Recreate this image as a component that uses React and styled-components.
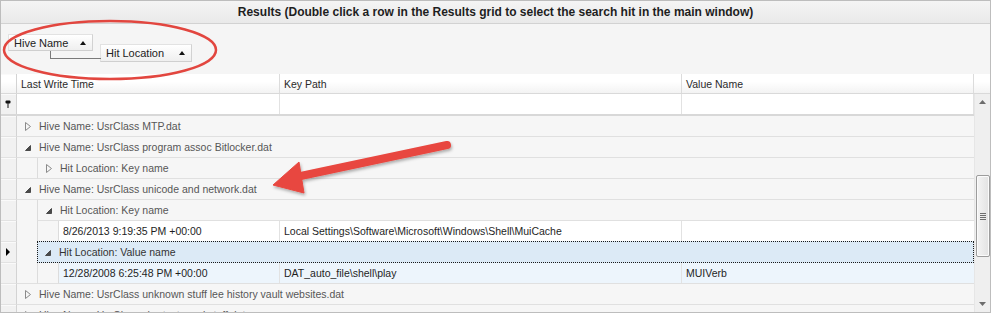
import React from "react";
import styled, { createGlobalStyle } from "styled-components";

const GlobalStyle = createGlobalStyle`
  html, body {
    margin: 0;
    padding: 0;
    background: #ffffff;
  }
  body {
    font-family: "Liberation Sans", Arial, sans-serif;
  }
`;

const Frame = styled.div`
  position: relative;
  width: 991px;
  height: 313px;
  box-sizing: border-box;
  border: 1px solid #bdbdbd;
  overflow: hidden;
  background: #f6f6f6;
  font-family: "Liberation Sans", Arial, sans-serif;
  font-size: 10.5px;
`;

const TitleBar = styled.div`
  height: 23px;
  box-sizing: border-box;
  border-bottom: 1px solid #d2d2d2;
  background: linear-gradient(#f4f4f4, #e9e9e9);
  display: flex;
  align-items: center;
  justify-content: center;
  font-weight: bold;
  font-size: 12px;
  color: #1e1e1e;
`;

const GroupPanel = styled.div`
  height: 50px;
  box-sizing: border-box;
  padding: 10px 7px 0;
  background: #f5f5f5;
  display: flex;
  align-items: flex-start;
`;

const GroupChip = styled.div`
  position: relative;
  box-sizing: border-box;
  width: ${(p) => p.$w}px;
  height: ${(p) => p.$h}px;
  margin-top: ${(p) => p.$top || 0}px;
  margin-left: ${(p) => p.$left || 0}px;
  padding: 0 6px 0 5px;
  display: flex;
  align-items: center;
  justify-content: space-between;
  background: linear-gradient(#ffffff, #efefef);
  border: 1px solid #e2e2e2;
  border-right-color: #d2d2d2;
  border-bottom-color: #cfcfcf;
  color: #222;
  font-size: 11px;

  ${(p) =>
    p.$linked &&
    `
    &::before {
      content: "";
      position: absolute;
      left: -51px;
      top: 6px;
      width: 50px;
      height: 7px;
      border-left: 1px solid #7a7a7a;
      border-bottom: 1px solid #7a7a7a;
    }
  `}
`;

const SortArrow = styled.span`
  width: 0;
  height: 0;
  border-left: 3.5px solid transparent;
  border-right: 3.5px solid transparent;
  border-bottom: 4px solid #111;
`;

const Grid = styled.div`
  display: flex;
  flex-direction: column;
`;

const HeaderRow = styled.div`
  display: flex;
  height: 20px;
  box-sizing: border-box;
  border-bottom: 1px solid #d9d9d9;
  background: linear-gradient(#ffffff 40%, #f3f3f3);
`;

const HeaderCell = styled.div`
  width: ${(p) => p.$w}px;
  box-sizing: border-box;
  border-right: ${(p) => (p.$noLine ? "none" : "1px solid #dcdcdc")};
  padding-left: 4px;
  display: flex;
  align-items: center;
  color: #2a2a2a;
  white-space: nowrap;
`;

const Body = styled.div`
  display: flex;
`;

const Rows = styled.div`
  width: 973px;
  display: flex;
  flex-direction: column;
`;

const Row = styled.div`
  display: flex;
  height: ${(p) => p.$h || 21}px;
  flex-shrink: 0;
`;

const Indicator = styled.div`
  width: 16px;
  flex-shrink: 0;
  box-sizing: border-box;
  background: #f1f1f1;
  border-right: 1px solid #d3d3d3;
  border-bottom: 1px solid #e2e2e2;
  box-shadow: inset 0 1px 0 #fafafa;
  display: flex;
  align-items: center;
  justify-content: center;
  padding-right: 2px;
`;

const Indent = styled.div`
  flex-shrink: 0;
  box-sizing: border-box;
  width: ${(p) => (p.$inner ? 21 : 20)}px;
  border-left: ${(p) => (p.$inner ? "1px solid #dcdcdc" : "none")};
  border-bottom: ${(p) => (p.$closing ? "1px solid #e0e0e0" : "none")};
  background: #f6f6f6;
`;

const GroupBody = styled.div`
  flex: 1;
  box-sizing: border-box;
  display: flex;
  align-items: center;
  gap: 8px;
  padding-left: 8px;
  background: ${(p) => (p.$selected ? "#dceaf6" : "#f6f6f6")};
  border-left: ${(p) => (p.$nested ? "1px solid #dcdcdc" : "none")};
  border-bottom: 1px solid #e0e0e0;
  color: #575757;
  white-space: nowrap;

  ${(p) =>
    p.$selected &&
    `
    border: 1px dotted #1a1a1a;
    margin-top: -1px;
    height: 22px;
    padding-left: 7px;
    color: #333;
  `}
`;

const DataBody = styled.div`
  flex: 1;
  display: flex;
  box-sizing: border-box;
  border-left: 1px solid #dcdcdc;
  border-bottom: 1px solid #e0e0e0;
  background: ${(p) => (p.$tint ? "#edf5fc" : "#ffffff")};
  color: #1e1e1e;
`;

const Cell = styled.div`
  width: ${(p) => p.$w}px;
  flex-shrink: 0;
  box-sizing: border-box;
  border-right: ${(p) => (p.$noLine ? "none" : "1px solid #e2e2e2")};
  padding-left: 4px;
  display: flex;
  align-items: center;
  white-space: nowrap;
  overflow: hidden;
`;

const FilterRow = styled.div`
  display: flex;
  height: 22px;
  box-sizing: border-box;
  border-bottom: 2px solid #d8d8d8;
  background: #ffffff;
`;

const ScrollBar = styled.div`
  width: 16px;
  height: 218px;
  box-sizing: border-box;
  background: #efefef;
  border-left: 1px solid #e6e6e6;
  display: flex;
  flex-direction: column;
  align-items: center;
`;

const ScrollArrow = styled.div`
  height: 16px;
  display: flex;
  align-items: center;
  justify-content: center;
  width: 100%;
`;

const ScrollTrack = styled.div`
  flex: 1;
  width: 100%;
  display: flex;
  flex-direction: column;
  align-items: center;
  padding-top: 65px;
  box-sizing: border-box;
`;

const Thumb = styled.div`
  width: 14px;
  height: 82px;
  box-sizing: border-box;
  border: 1px solid #9c9c9c;
  border-radius: 2px;
  background: linear-gradient(90deg, #f4f4f4, #e2e2e2);
  box-shadow: inset 0 0 0 1px #fbfbfb;
  display: flex;
  flex-direction: column;
  align-items: center;
  justify-content: center;
  gap: 1px;
`;

const Grip = styled.span`
  width: 6px;
  height: 1px;
  background: #6e6e6e;
`;

const Overlay = styled.svg`
  position: absolute;
  left: -1px;
  top: -1px;
  pointer-events: none;
`;

const Collapsed = () => (
  <svg width="6" height="9" viewBox="0 0 6 9">
    <path d="M0.5 0.5 L5.5 4.5 L0.5 8.5 Z" fill="none" stroke="#8a8a8a" strokeWidth="1" />
  </svg>
);

const Expanded = () => (
  <svg width="6" height="9" viewBox="0 0 6 9">
    <path d="M0.5 7.5 L5.5 7.5 L5.5 2.5 Z" fill="#4a4a4a" stroke="#4a4a4a" strokeWidth="1" strokeLinejoin="round" />
  </svg>
);

const CurrentMark = () => (
  <svg width="4" height="8" viewBox="0 0 4 8">
    <path d="M0 0 L4 4 L0 8 Z" fill="#000" />
  </svg>
);

const FilterPin = () => (
  <svg width="6" height="8" viewBox="0 0 6 8">
    <rect x="0.5" y="0.5" width="5" height="3" rx="1" fill="#111" />
    <rect x="2.5" y="3" width="1" height="5" fill="#111" />
  </svg>
);

const Tri = ({ up }) => (
  <svg width="7" height="4" viewBox="0 0 7 4">
    <path d={up ? "M0 4 L3.5 0 L7 4 Z" : "M0 0 L3.5 4 L7 0 Z"} fill="#6c6c6c" />
  </svg>
);

const columns = [263, 402, 292];

const rows = [
  { kind: "group", level: 0, open: false, text: "Hive Name: UsrClass MTP.dat" },
  { kind: "group", level: 0, open: true, text: "Hive Name: UsrClass program assoc Bitlocker.dat" },
  { kind: "group", level: 1, open: false, text: "Hit Location: Key name", closing: true },
  { kind: "group", level: 0, open: true, text: "Hive Name: UsrClass unicode and network.dat" },
  { kind: "group", level: 1, open: true, text: "Hit Location: Key name" },
  {
    kind: "data",
    cells: ["8/26/2013 9:19:35 PM +00:00", "Local Settings\\Software\\Microsoft\\Windows\\Shell\\MuiCache", ""],
  },
  { kind: "group", level: 1, open: true, text: "Hit Location: Value name", selected: true },
  {
    kind: "data",
    tint: true,
    closing: true,
    cells: ["12/28/2008 6:25:48 PM +00:00", "DAT_auto_file\\shell\\play", "MUIVerb"],
  },
  { kind: "group", level: 0, open: false, text: "Hive Name: UsrClass unknown stuff lee history vault websites.dat" },
  { kind: "group", level: 0, open: false, text: "Hive Name: UsrClass shortcuts and stuff.dat" },
];

function GridRow({ row }) {
  if (row.kind === "data") {
    return (
      <Row>
        <Indicator />
        <Indent $closing={row.closing} />
        <Indent $inner $closing={row.closing} />
        <DataBody $tint={row.tint}>
          <Cell $w={columns[0] - 42}>{row.cells[0]}</Cell>
          <Cell $w={columns[1]}>{row.cells[1]}</Cell>
          <Cell $w={columns[2] - 1} $noLine>{row.cells[2]}</Cell>
        </DataBody>
      </Row>
    );
  }
  return (
    <Row>
      <Indicator>{row.selected && <CurrentMark />}</Indicator>
      {row.level > 0 && <Indent $closing={row.closing} />}
      <GroupBody $nested={row.level > 0} $selected={row.selected}>
        {row.open ? <Expanded /> : <Collapsed />}
        <span>{row.text}</span>
      </GroupBody>
    </Row>
  );
}

export default function App() {
  return (
    <>
      <GlobalStyle />
      <Frame>
        <TitleBar>
          Results (Double click a row in the Results grid to select the search hit in the main window)
        </TitleBar>
        <GroupPanel>
          <GroupChip $w={85} $h={17}>
            Hive Name
            <SortArrow />
          </GroupChip>
          <GroupChip $w={92} $h={18} $top={10} $left={7} $linked>
            Hit Location
            <SortArrow />
          </GroupChip>
        </GroupPanel>
        <Grid>
          <HeaderRow>
            <Indicator as="div" style={{ background: "transparent", borderBottom: "none" }} />
            <HeaderCell $w={columns[0]}>Last Write Time</HeaderCell>
            <HeaderCell $w={columns[1]}>Key Path</HeaderCell>
            <HeaderCell $w={columns[2]}>Value Name</HeaderCell>
            <HeaderCell $w={16} $noLine />
          </HeaderRow>
          <Body>
            <Rows>
              <FilterRow>
                <Indicator style={{ borderBottom: "none" }}>
                  <FilterPin />
                </Indicator>
                <Cell $w={columns[0]} />
                <Cell $w={columns[1]} />
                <Cell $w={columns[2]} />
              </FilterRow>
              {rows.map((r, i) => (
                <GridRow key={i} row={r} />
              ))}
            </Rows>
            <ScrollBar>
              <ScrollArrow>
                <Tri up />
              </ScrollArrow>
              <ScrollTrack>
                <Thumb>
                  <Grip />
                  <Grip />
                  <Grip />
                  <Grip />
                </Thumb>
              </ScrollTrack>
              <ScrollArrow>
                <Tri />
              </ScrollArrow>
            </ScrollBar>
          </Body>
        </Grid>
        <Overlay width="991" height="313" viewBox="0 0 991 313">
          <defs>
            <filter id="shade" x="-10%" y="-30%" width="130%" height="180%">
              <feDropShadow dx="1" dy="2" stdDeviation="1.5" floodColor="#000" floodOpacity="0.3" />
            </filter>
          </defs>
          <ellipse cx="110" cy="50" rx="106" ry="29" fill="none" stroke="#e2463f" strokeWidth="2.5" />
          <g filter="url(#shade)" fill="#e8473f" stroke="#e8473f">
            <line x1="447" y1="145" x2="296" y2="177" strokeWidth="8" strokeLinecap="round" />
            <path d="M273 185 L299 162 L304 193 Z" strokeWidth="1" strokeLinejoin="round" />
          </g>
        </Overlay>
      </Frame>
    </>
  );
}
